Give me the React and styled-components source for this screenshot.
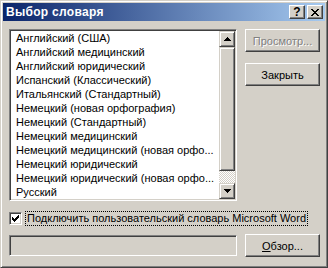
import styled, { createGlobalStyle } from 'styled-components'

const FACE = '#D4D0C8'

const GlobalStyle = createGlobalStyle`
  html, body {
    margin: 0;
    padding: 0;
    background: ${FACE};
  }
  body {
    font-family: "Liberation Sans", Arial, sans-serif;
    font-size: 11px;
    color: #000;
  }
`

const items = [
  'Английский (США)',
  'Английский медицинский',
  'Английский юридический',
  'Испанский (Классический)',
  'Итальянский (Стандартный)',
  'Немецкий (новая орфография)',
  'Немецкий (Стандартный)',
  'Немецкий медицинский',
  'Немецкий медицинский (новая орфо...',
  'Немецкий юридический',
  'Немецкий юридический (новая орфо...',
  'Русский',
]

const App = () => {
  return <>
    <GlobalStyle />
    <Window>
      <TitleBar>
        <Title>Выбор словаря</Title>
        <TitleButtons>
          <TitleButton>?</TitleButton>
          <TitleButton>
            <svg width="8" height="7" viewBox="0 0 8 7">
              <path d="M0 0h2v1h1v1h2v-1h1v-1h2v1h-1v1h-1v1h-1v1h1v1h1v1h1v1h-2v-1h-1v-1h-2v1h-1v1h-2v-1h1v-1h1v-1h1v-1h-1v-1h-1v-1h-1z" fill="#000" />
            </svg>
          </TitleButton>
        </TitleButtons>
      </TitleBar>

      <Body>
        <TopRow>
          <ListBox>
            <ListItems>
              {items.map(item => <ListItem key={item}>{item}</ListItem>)}
            </ListItems>
            <ScrollBar>
              <ScrollButton>
                <svg width="7" height="4" viewBox="0 0 7 4"><path d="M3 0h1v1h1v1h1v1h1v1h-7v-1h1v-1h1v-1h1z" fill="#000" /></svg>
              </ScrollButton>
              <Thumb />
              <Track />
              <ScrollButton>
                <svg width="7" height="4" viewBox="0 0 7 4"><path d="M0 0h7v1h-1v1h-1v1h-1v1h-1v-1h-1v-1h-1v-1h-1z" fill="#000" /></svg>
              </ScrollButton>
            </ScrollBar>
          </ListBox>

          <ButtonColumn>
            <Button disabled>Просмотр...</Button>
            <Button>Закрыть</Button>
          </ButtonColumn>
        </TopRow>

        <CheckRow>
          <CheckBox>
            <svg width="7" height="7" viewBox="0 0 7 7">
              <path d="M6 0h1v3h-1v1h-1v1h-1v1h-1v1h-1v-1h-1v-1h-1v-3h1v1h1v1h1v-1h1v-1h1v-1h1z" fill="#000" />
            </svg>
          </CheckBox>
          <CheckLabel>Подключить пользовательский словарь Microsoft Word</CheckLabel>
        </CheckRow>

        <BottomRow>
          <Field />
          <Button><u>О</u>бзор...</Button>
        </BottomRow>
      </Body>
    </Window>
  </>
}

export default App

const Window = styled.div`
  width: 328px;
  height: 268px;
  box-sizing: border-box;
  border: 1px solid;
  border-color: ${FACE} #404040 #404040 ${FACE};
  box-shadow: inset 1px 1px #fff, inset -1px -1px #808080;
  padding: 2px;
  display: flex;
  flex-direction: column;
`

const TitleBar = styled.div`
  height: 18px;
  display: flex;
  align-items: center;
  justify-content: space-between;
  padding: 0 2px 0 3px;
  background: linear-gradient(to right, #0A246A, #A6CAF0);
`

const Title = styled.span`
  color: #fff;
  font-weight: bold;
  font-size: 12px;
  letter-spacing: 0.3px;
`

const TitleButtons = styled.div`
  display: flex;
  gap: 2px;
`

const TitleButton = styled.div`
  width: 16px;
  height: 14px;
  box-sizing: border-box;
  background: ${FACE};
  border: 1px solid;
  border-color: #fff #404040 #404040 #fff;
  box-shadow: inset -1px -1px #808080;
  display: flex;
  align-items: center;
  justify-content: center;
  font-weight: bold;
  font-size: 12px;
  line-height: 1;
`

const Body = styled.div`
  flex: 1;
  display: flex;
  flex-direction: column;
  padding: 8px 4px 0 6px;
`

const TopRow = styled.div`
  display: flex;
  gap: 8px;
`

const ListBox = styled.div`
  width: 228px;
  height: 172px;
  box-sizing: border-box;
  border: 1px solid;
  border-color: #808080 #fff #fff #808080;
  box-shadow: inset 1px 1px #404040, inset -1px -1px ${FACE};
  padding: 1px;
  background: #fff;
  display: flex;
`

const ListItems = styled.div`
  flex: 1;
  padding-left: 5px;
  overflow: hidden;
`

const ListItem = styled.div`
  height: 14px;
  line-height: 14px;
  white-space: nowrap;
`

const ScrollBar = styled.div`
  width: 16px;
  display: flex;
  flex-direction: column;
`

const ScrollButton = styled.div`
  width: 16px;
  height: 16px;
  box-sizing: border-box;
  background: ${FACE};
  border: 1px solid;
  border-color: ${FACE} #404040 #404040 ${FACE};
  box-shadow: inset 1px 1px #fff, inset -1px -1px #808080;
  display: flex;
  align-items: center;
  justify-content: center;
`

const Thumb = styled(ScrollButton)`
  height: 124px;
`

const Track = styled.div`
  flex: 1;
  background: repeating-conic-gradient(#fff 0 25%, ${FACE} 0 50%) 0 0 / 2px 2px;
`

const ButtonColumn = styled.div`
  display: flex;
  flex-direction: column;
  gap: 11px;
`

const Button = styled.div`
  width: 75px;
  height: 23px;
  box-sizing: border-box;
  background: ${FACE};
  border: 1px solid;
  border-color: #fff #404040 #404040 #fff;
  box-shadow: inset -1px -1px #808080;
  display: flex;
  align-items: center;
  justify-content: center;
  color: ${p => (p.disabled ? '#808080' : '#000')};
  text-shadow: ${p => (p.disabled ? '1px 1px #fff' : 'none')};
  white-space: nowrap;
`

const CheckRow = styled.div`
  display: flex;
  align-items: center;
  gap: 4px;
  margin-top: 11px;
`

const CheckBox = styled.div`
  width: 13px;
  height: 13px;
  box-sizing: border-box;
  background: #fff;
  border: 1px solid;
  border-color: #808080 #fff #fff #808080;
  box-shadow: inset 1px 1px #404040, inset -1px -1px ${FACE};
  display: flex;
  align-items: center;
  justify-content: center;
`

const CheckLabel = styled.span`
  padding: 0 1px;
  line-height: 13px;
  outline: 1px dotted #000;
  white-space: nowrap;
`

const BottomRow = styled.div`
  display: flex;
  align-items: center;
  gap: 8px;
  margin-top: 9px;
`

const Field = styled.div`
  width: 228px;
  height: 21px;
  box-sizing: border-box;
  background: ${FACE};
  border: 1px solid;
  border-color: #808080 #fff #fff #808080;
  box-shadow: inset 1px 1px #404040, inset -1px -1px ${FACE};
`
